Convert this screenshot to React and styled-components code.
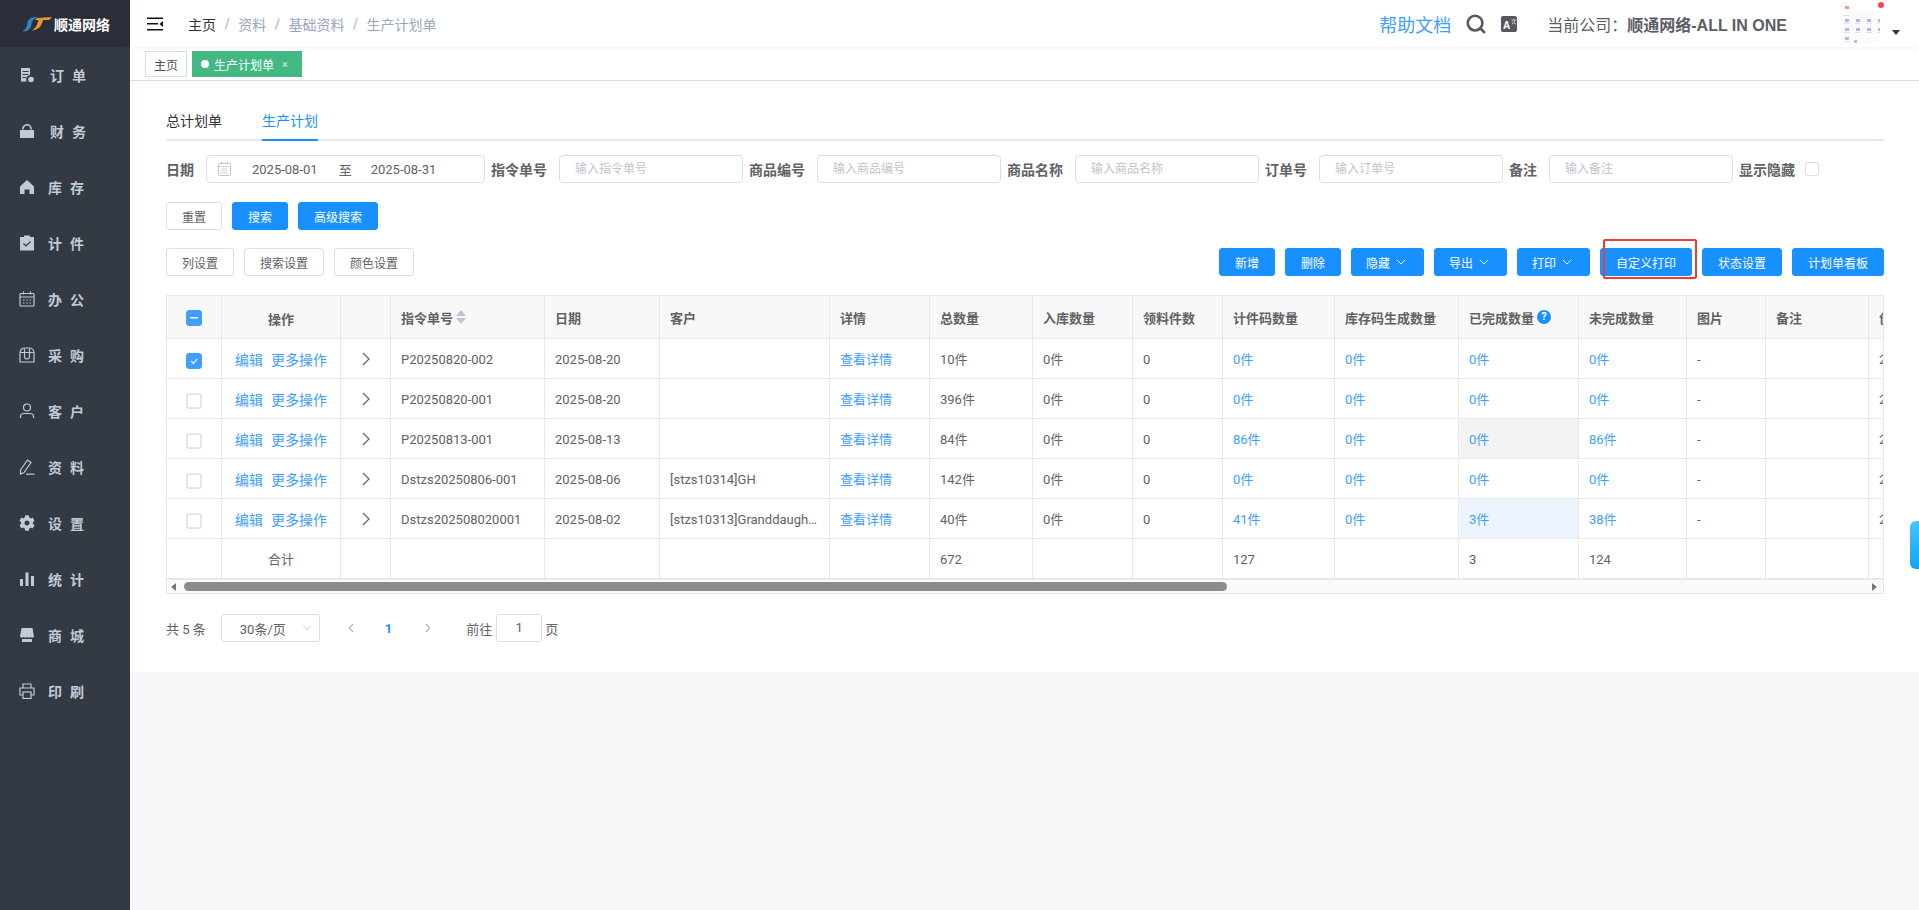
import React from 'react'
import styled, { createGlobalStyle } from 'styled-components'
import { ChevronDown, ChevronLeft, ChevronRight, Search } from 'lucide-react'
import { FaCog } from 'react-icons/fa'

const GlobalStyle = createGlobalStyle`
  html, body { margin: 0; padding: 0; height: 100%; background: #f7f8fa; overflow: hidden; }
  body { font-family: Roboto, "Noto Sans CJK SC", sans-serif; color: #606266; font-size: 13px; }
  * { box-sizing: border-box; }
`

const Shell = styled.div`
  display: flex;
  width: 100%;
  height: 100vh;
`

const Sidebar = styled.aside`
  width: 130px;
  flex: none;
  background: #343a43;
  display: flex;
  flex-direction: column;
`

const LogoBar = styled.div`
  height: 47px;
  background: #2b2f3a;
  display: flex;
  align-items: center;
  padding-left: 22px;
  gap: 1px;
`

const LogoText = styled.span`
  color: #fff;
  font-size: 14px;
  font-weight: 700;
`

const Nav = styled.nav`
  display: flex;
  flex-direction: column;
  padding-top: 0;
`

const NavItem = styled.div`
  height: 56px;
  display: flex;
  align-items: center;
  padding-left: 19px;
  color: #bfcbd9;
`

const NavLabel = styled.span`
  font-size: 14px;
  font-weight: 700;
  letter-spacing: 8px;
  margin-left: ${p => (p.$wide ? 15 : 13)}px;
`

const Main = styled.div`
  flex: 1;
  min-width: 0;
  display: flex;
  flex-direction: column;
`

const Header = styled.header`
  height: 47px;
  background: #fff;
  display: flex;
  align-items: center;
  padding: 0 19px 0 17px;
  box-shadow: 0 1px 4px rgba(0, 21, 41, 0.06);
  position: relative;
`

const Breadcrumb = styled.div`
  display: flex;
  align-items: center;
  margin-left: 25px;
  font-size: 14px;
  color: #97a8be;
`

const Crumb = styled.span`
  color: ${p => (p.$current ? '#303133' : '#97a8be')};
`

const CrumbSep = styled.span`
  color: #c0c4cc;
  font-weight: 700;
  margin: 0 8.5px;
`

const HeaderRight = styled.div`
  margin-left: auto;
  display: flex;
  align-items: center;
  color: #5a5e66;
`

const HelpLink = styled.a`
  color: #409eff;
  font-size: 18px;
  margin-right: 14px;
`

const SearchIcon = styled(Search)`
  margin-right: 14px;
`

const Company = styled.div`
  font-size: 16px;
  margin: 0 55px 0 30px;
  color: #5a5e66;
  b { font-weight: 700; font-family: "Liberation Sans", "Noto Sans CJK SC", sans-serif; }
`

const AvatarBox = styled.div`
  position: relative;
  width: 38px;
  height: 42px;
  margin-right: 12px;
`

const RedDot = styled.i`
  position: absolute;
  top: -1px;
  right: -4px;
  width: 6px;
  height: 6px;
  border-radius: 50%;
  background: #f44;
`

const Caret = styled.i`
  width: 0;
  height: 0;
  border-left: 4px solid transparent;
  border-right: 4px solid transparent;
  border-top: 5px solid #333;
  margin-top: 17px;
`

const TagBar = styled.div`
  height: 34px;
  background: #fff;
  border-bottom: 1px solid #d8dce5;
  display: flex;
  align-items: flex-start;
  gap: 5px;
  padding: 4px 0 0 15px;
`

const Tag = styled.div`
  height: 26px;
  display: flex;
  align-items: center;
  font-size: 12px;
  padding: ${p => (p.$active ? '0 13px 0 8px' : '0 8px')};
  background: ${p => (p.$active ? '#42b983' : '#fff')};
  color: ${p => (p.$active ? '#fff' : '#495060')};
  border: 1px solid ${p => (p.$active ? '#42b983' : '#d8dce5')};
`

const TagDot = styled.i`
  width: 8px;
  height: 8px;
  border-radius: 50%;
  background: #fff;
  margin-right: 5px;
`

const TagClose = styled.span`
  font-size: 11px;
  margin-left: 8px;
  color: #d5f0e3;
`

const Panel = styled.section`
  background: #fff;
  padding: 22px 35px 30px 36px;
  height: 591px;
`

const TabBar = styled.div`
  display: flex;
  gap: 40px;
  height: 38px;
  border-bottom: 2px solid #e4e7ed;
`

const TabItem = styled.div`
  height: 38px;
  line-height: 36px;
  font-size: 14px;
  color: ${p => (p.$active ? '#1890ff' : '#303133')};
  border-bottom: 2px solid ${p => (p.$active ? '#1890ff' : 'transparent')};
`

const FilterRow = styled.div`
  display: flex;
  align-items: center;
  gap: 6px;
  margin-top: 14px;
  height: 28px;
`

const Field = styled.div`
  display: flex;
  align-items: center;
  gap: 12px;
`

const FieldLabel = styled.label`
  font-size: 14px;
  font-weight: 700;
  color: #606266;
`

const TextInput = styled.div`
  width: 184px;
  height: 28px;
  border: 1px solid #dcdfe6;
  border-radius: 4px;
  padding-left: 15px;
  font-size: 12px;
  line-height: 26px;
  color: #c0c4cc;
`

const DateRange = styled.div`
  width: 279px;
  height: 28px;
  border: 1px solid #dcdfe6;
  border-radius: 4px;
  display: flex;
  align-items: center;
  padding-left: 11px;
  font-size: 13px;
  color: #606266;
`

const DateValue = styled.span`
  margin-left: ${p => p.$gap}px;
`

const HideCheck = styled.i`
  width: 14px;
  height: 14px;
  border: 1px solid #dcdfe6;
  border-radius: 2px;
  margin-left: 4px;
`

const ButtonRow = styled.div`
  display: flex;
  gap: 10px;
  margin-top: ${p => p.$top}px;
`

const Button = styled.button`
  position: relative;
  height: 28px;
  width: ${p => p.$w}px;
  padding: 0;
  display: flex;
  align-items: center;
  justify-content: center;
  gap: 3px;
  font-family: inherit;
  font-size: 12px;
  border-radius: 3px;
  color: ${p => (p.$primary ? '#fff' : '#606266')};
  background: ${p => (p.$primary ? '#1890ff' : '#fff')};
  border: 1px solid ${p => (p.$primary ? '#1890ff' : '#dcdfe6')};
`

const RedFrame = styled.i`
  position: absolute;
  top: -10px;
  bottom: -4px;
  left: 2px;
  right: -6px;
  border: 2px solid #f03a3a;
  border-radius: 2px;
`

const ActionBar = styled.div`
  display: flex;
  justify-content: space-between;
  margin-top: 18px;
`

const TableWrap = styled.div`
  margin-top: 19px;
  border: 1px solid #e8e8e8;
  overflow: hidden;
`

const Table = styled.table`
  table-layout: fixed;
  border-collapse: separate;
  border-spacing: 0;
  width: 1862px;
`

const Th = styled.th`
  height: 43px;
  background: #f8f8f9;
  font-size: 13px;
  font-weight: 700;
  color: #606266;
  text-align: ${p => (p.$center ? 'center' : 'left')};
  padding: ${p => (p.$center ? '2px 0 0' : '0 10px')};
  border-right: 1px solid #e8e8e8;
  border-bottom: 1px solid #e8e8e8;
  white-space: nowrap;
  overflow: hidden;
`

const Td = styled.td`
  height: 40px;
  font-size: 13px;
  color: ${p => (p.$link ? '#409eff' : '#606266')};
  background: ${p => p.$bg || '#fff'};
  text-align: ${p => (p.$center ? 'center' : 'left')};
  padding: ${p => (p.$center ? '0' : '0 10px')};
  padding-top: ${p => p.$drop || 0}px;
  border-right: 1px solid #e8e8e8;
  border-bottom: 1px solid #e8e8e8;
  white-space: nowrap;
  overflow: hidden;
  text-overflow: ellipsis;
`

const HeadInner = styled.span`
  display: inline-flex;
  align-items: center;
  gap: 3px;
`

const SortCaret = styled.span`
  display: inline-flex;
  flex-direction: column;
  gap: 2px;
  i { width: 0; height: 0; border-left: 5px solid transparent; border-right: 5px solid transparent; }
  i:first-child { border-bottom: 6px solid #c0c4cc; }
  i:last-child { border-top: 6px solid #c0c4cc; }
`

const HelpBadge = styled.span`
  width: 14px;
  height: 14px;
  border-radius: 50%;
  background: #1890ff;
  color: #fff;
  font-size: 11px;
  font-weight: 700;
  line-height: 14px;
  text-align: center;
`

const Check = styled.span`
  display: inline-flex;
  align-items: center;
  justify-content: center;
  vertical-align: middle;
  width: 16px;
  height: 16px;
  border-radius: 3px;
  border: ${p => (p.$on ? '1px solid #409eff' : '2px solid #e3e6ec')};
  background: ${p => (p.$on ? '#409eff' : '#fff')};
`

const CellLink = styled.a`
  color: #409eff;
  font-size: 14px;
  margin-left: ${p => p.$gap || 0}px;
`

const ScrollTrack = styled.div`
  height: 14px;
  background: #fafafa;
  border-top: 1px solid #e8e8e8;
  display: flex;
  align-items: center;
  padding: 0 6px 0 4px;
`

const ArrowTip = styled.i`
  width: 0;
  height: 0;
  border-top: 4px solid transparent;
  border-bottom: 4px solid transparent;
  border-${p => (p.$left ? 'right' : 'left')}: 5px solid #777;
  margin-left: ${p => (p.$left ? 0 : 'auto')};
`

const ScrollThumb = styled.div`
  width: 1043px;
  height: 9px;
  border-radius: 5px;
  background: #8c8c8c;
  margin-left: 8px;
`

const Pager = styled.div`
  display: flex;
  align-items: center;
  height: 28px;
  margin-top: 20px;
  font-size: 13px;
  color: #606266;
`

const PageSelect = styled.div`
  width: 99px;
  height: 28px;
  margin: 0 24px 0 15px;
  border: 1px solid #dcdfe6;
  border-radius: 3px;
  display: flex;
  align-items: center;
  justify-content: space-between;
  padding: 0 5px 0 18px;
`

const PageNum = styled.span`
  color: #1890ff;
  font-weight: 700;
  margin: 0 29px 0 27px;
`

const JumpInput = styled.div`
  width: 46px;
  height: 28px;
  border: 1px solid #dcdfe6;
  border-radius: 3px;
  margin: 0 3px 0 4px;
  text-align: center;
  line-height: 26px;
`

const JumpLabel = styled.span`
  margin-left: ${p => p.$left || 0}px;
`

const SideHandle = styled.div`
  position: fixed;
  right: 0;
  top: 521px;
  width: 9px;
  height: 48px;
  border-radius: 6px 0 0 6px;
  background: linear-gradient(180deg, #4cc3ff, #0ea5ef);
`

const Logo = () => (
  <svg width="31" height="16" viewBox="0 0 31 16">
    <path d="M16 1C9 1 6 3 5.500 7 5 11 3.500 14 .5 15.500 6 15.500 8.500 13 9.500 8.500 10 5 11 3 16 1Z" fill="#2f86c9" />
    <path d="M15 2L30 1L27 4H21C20 9 17 14 10 14.500 14 12 15.500 8 16.500 4H13Z" fill="#e8962e" />
  </svg>
)

const Hamburger = () => (
  <svg width="16" height="14" viewBox="0 0 16 14">
    <path d="M0 0.500H16V2H0ZM0 6H11V7.500H0ZM0 12H16V13.500H0Z" fill="#111" />
    <path d="M16 4V10L12.500 7Z" fill="#111" />
  </svg>
)

const Glyph = ({ children, fill }) => (
  <svg
    width="16"
    height="16"
    viewBox="0 0 16 16"
    fill={fill ? 'currentColor' : 'none'}
    stroke={fill ? 'none' : 'currentColor'}
    strokeWidth="1.200"
  >
    {children}
  </svg>
)

const icons = {
  order: (
    <Glyph fill>
      <path d="M2 1H11V8A4.500 4.500 0 0 0 7.500 14.500H2ZM3.500 4V5H9.500V4ZM3.500 7V8H9.500V7ZM3.500 10V11H7V10Z" fillRule="evenodd" />
      <circle cx="12" cy="12.500" r="2.800" />
    </Glyph>
  ),
  money: (
    <Glyph fill>
      <path d="M1 7H15V14.500A.5 .5 0 0 1 14.500 15H1.500A.5 .5 0 0 1 1 14.500Z" />
      <path d="M3 6.500C3 3.500 5 1 8 1S13 3.500 13 6.500H11.500C11.500 4.500 10 2.500 8 2.500S4.500 4.500 4.500 6.500Z" />
    </Glyph>
  ),
  home: (
    <Glyph fill>
      <path d="M8 1L15 7.500V15H10.500V10.500H5.500V15H1V7.500Z" />
    </Glyph>
  ),
  clip: (
    <Glyph fill>
      <path d="M5 0.500H11V2H15V15.500H1V2H5Z" />
      <path d="M4.500 8.500L7 11L11.500 6.500" fill="none" stroke="#343a43" strokeWidth="1.200" />
    </Glyph>
  ),
  calendar: (
    <Glyph>
      <rect x="1" y="2.500" width="14" height="12.500" rx="1" />
      <path d="M1 6H15M4.500 0.500V3.500M11.500 0.500V3.500M4 9H5.500M7.250 9H8.750M10.500 9H12M4 12H5.500M7.250 12H8.750M10.500 12H12" />
    </Glyph>
  ),
  box: (
    <Glyph>
      <path d="M1 6C1 3 3 1 6 1H10C13 1 15 3 15 6V15H1Z" />
      <path d="M1 5.500H15M5.500 1.500V9.500A2.500 2.500 0 0 0 10.500 9.500V1.500" />
    </Glyph>
  ),
  user: (
    <Glyph>
      <circle cx="8" cy="4.500" r="3.500" />
      <path d="M1.500 15V13.500C1.500 11.500 3 10.500 5 10.500H11C13 10.500 14.500 11.500 14.500 13.500V15" />
    </Glyph>
  ),
  pen: (
    <Glyph>
      <path d="M1.500 11L8.500 1L12 3.500L5 13.500L1.500 15Z" />
      <path d="M7 15.200H15.500" />
    </Glyph>
  ),
  bars: (
    <Glyph fill>
      <path d="M1 8H4V15H1ZM6.500 1.500H9.500V15H6.500ZM12 5H15V15H12Z" />
    </Glyph>
  ),
  shop: (
    <Glyph fill>
      <path d="M2.500 1H13.500L15 9.500C14 11 12.500 11 11.500 10C10.500 11 9 11 8 10C7 11 5.500 11 4.500 10C3.500 11 2 11 1 9.500Z" />
      <path d="M3 12H13V15H3Z" />
    </Glyph>
  ),
  print: (
    <Glyph>
      <path d="M4 5V1H12V5M4 12H1V5H15V12H12" />
      <rect x="4" y="9" width="8" height="6.500" />
    </Glyph>
  ),
}

const navItems = [
  { icon: icons.order, label: '订单', wide: true },
  { icon: icons.money, label: '财务', wide: true },
  { icon: icons.home, label: '库存' },
  { icon: icons.clip, label: '计件' },
  { icon: icons.calendar, label: '办公' },
  { icon: icons.box, label: '采购' },
  { icon: icons.user, label: '客户' },
  { icon: icons.pen, label: '资料' },
  { icon: <FaCog size={16} />, label: '设置' },
  { icon: icons.bars, label: '统计' },
  { icon: icons.shop, label: '商城' },
  { icon: icons.print, label: '印刷' },
]

const colWidths = [55, 119, 50, 154, 115, 170, 100, 103, 100, 90, 112, 124, 120, 108, 79, 103, 160]

const rows = [
  { on: true, no: 'P20250820-002', date: '2025-08-20', customer: '', total: '10件', code: '0件', stock: '0件', done: '0件', todo: '0件' },
  { no: 'P20250820-001', date: '2025-08-20', customer: '', total: '396件', code: '0件', stock: '0件', done: '0件', todo: '0件' },
  { no: 'P20250813-001', date: '2025-08-13', customer: '', total: '84件', code: '86件', stock: '0件', done: '0件', todo: '86件', doneBg: '#f3f3f3' },
  { no: 'Dstzs20250806-001', date: '2025-08-06', customer: '[stzs10314]GH', total: '142件', code: '0件', stock: '0件', done: '0件', todo: '0件' },
  { no: 'Dstzs202508020001', date: '2025-08-02', customer: '[stzs10313]Granddaughter', total: '40件', code: '41件', stock: '0件', done: '3件', todo: '38件', doneBg: '#ecf5ff' },
]

const leftButtons = [
  { text: '列设置', w: 68 },
  { text: '搜索设置', w: 80 },
  { text: '颜色设置', w: 80 },
]

const rightButtons = [
  { text: '新增', w: 56 },
  { text: '删除', w: 56 },
  { text: '隐藏', w: 73, menu: true },
  { text: '导出', w: 73, menu: true },
  { text: '打印', w: 73, menu: true },
  { text: '自定义打印', w: 92, marked: true },
  { text: '状态设置', w: 80 },
  { text: '计划单看板', w: 92 },
]

const filters = [
  { label: '指令单号', hint: '输入指令单号' },
  { label: '商品编号', hint: '输入商品编号' },
  { label: '商品名称', hint: '输入商品名称' },
  { label: '订单号', hint: '输入订单号' },
  { label: '备注', hint: '输入备注' },
]

const Thumbnail = () => (
  <svg width="38" height="42" viewBox="0 0 38 42">
    <rect x="1" y="8" width="36" height="32" rx="5" fill="#fbfbfd" />
    <rect x="3" y="3" width="4" height="3" fill="#e9a27e" />
    <rect x="1" y="12" width="6" height="1" fill="#ddd" />
    {[0, 1, 2].map(r =>
      [0, 1, 2, 3].map(c =>
        r < 2 || c === 0 ? (
          <g key={`${r}-${c}`}>
            <rect x={3 + c * 11} y={16 + r * 9} width="4" height="3" fill="#b4b6ea" />
            <rect x={2 + c * 11} y={20 + r * 9} width="6" height="1" fill="#e2e2e2" />
          </g>
        ) : null,
      ),
    )}
    <rect x="12" y="37" width="3" height="3" fill="#9ec4f0" />
  </svg>
)

const TranslateIcon = () => (
  <svg width="16" height="16" viewBox="0 0 16 16">
    <rect width="16" height="16" rx="2" fill="#55585f" />
    <text x="2" y="13" fontSize="10" fontWeight="700" fill="#fff" fontFamily="Liberation Sans">A</text>
    <path d="M10.500 4H15M12.700 3V4M11 8C13 7 14 5.500 14 4M11.500 5.500C12.500 7 13.500 7.500 15 8" stroke="#ddd" strokeWidth=".8" fill="none" />
  </svg>
)

const CalendarIcon = () => (
  <svg width="13" height="14" viewBox="0 0 13 14" fill="none" stroke="#c0c4cc">
    <rect x="0.500" y="1.500" width="12" height="12" rx="1" />
    <path d="M0.500 4.500H12.500M3.500 0V2M9.500 0V2M3 7H10M3 9H10M3 11H10" strokeDasharray="1.500 .8" />
  </svg>
)

const TickIcon = () => (
  <svg width="10" height="10" viewBox="0 0 10 10" fill="none" stroke="#fff" strokeWidth="1.200">
    <path d="M2 5L4.300 7.300L8.200 2.800" />
  </svg>
)

const RowChevron = () => (
  <svg width="8" height="14" viewBox="0 0 8 14" fill="none" stroke="#606266" strokeWidth="1.200">
    <path d="M1 1L7 7L1 13" />
  </svg>
)

export default function App() {
  return (
    <Shell>
      <GlobalStyle />
      <Sidebar>
        <LogoBar>
          <Logo />
          <LogoText>顺通网络</LogoText>
        </LogoBar>
        <Nav>
          {navItems.map(item => (
            <NavItem key={item.label}>
              {item.icon}
              <NavLabel $wide={item.wide}>{item.label}</NavLabel>
            </NavItem>
          ))}
        </Nav>
      </Sidebar>

      <Main>
        <Header>
          <Hamburger />
          <Breadcrumb>
            <Crumb $current>主页</Crumb>
            <CrumbSep>/</CrumbSep>
            <Crumb>资料</Crumb>
            <CrumbSep>/</CrumbSep>
            <Crumb>基础资料</Crumb>
            <CrumbSep>/</CrumbSep>
            <Crumb>生产计划单</Crumb>
          </Breadcrumb>
          <HeaderRight>
            <HelpLink>帮助文档</HelpLink>
            <SearchIcon size={22} strokeWidth={2.800} color="#55585f" />
            <TranslateIcon />
            <Company>
              当前公司：<b>顺通网络-ALL IN ONE</b>
            </Company>
            <AvatarBox>
              <Thumbnail />
              <RedDot />
            </AvatarBox>
            <Caret />
          </HeaderRight>
        </Header>

        <TagBar>
          <Tag>主页</Tag>
          <Tag $active>
            <TagDot />
            生产计划单
            <TagClose>×</TagClose>
          </Tag>
        </TagBar>

        <Panel>
          <TabBar>
            <TabItem>总计划单</TabItem>
            <TabItem $active>生产计划</TabItem>
          </TabBar>

          <FilterRow>
            <Field>
              <FieldLabel>日期</FieldLabel>
              <DateRange>
                <CalendarIcon />
                <DateValue $gap={21}>2025-08-01</DateValue>
                <DateValue $gap={21}>至</DateValue>
                <DateValue $gap={19}>2025-08-31</DateValue>
              </DateRange>
            </Field>
            {filters.map(f => (
              <Field key={f.label}>
                <FieldLabel>{f.label}</FieldLabel>
                <TextInput>{f.hint}</TextInput>
              </Field>
            ))}
            <FieldLabel>显示隐藏</FieldLabel>
            <HideCheck />
          </FilterRow>

          <ButtonRow $top={19}>
            <Button $w={56}>重置</Button>
            <Button $w={56} $primary>搜索</Button>
            <Button $w={80} $primary>高级搜索</Button>
          </ButtonRow>

          <ActionBar>
            <ButtonRow $top={0}>
              {leftButtons.map(b => (
                <Button key={b.text} $w={b.w}>{b.text}</Button>
              ))}
            </ButtonRow>
            <ButtonRow $top={0}>
              {rightButtons.map(b => (
                <Button key={b.text} $w={b.w} $primary>
                  {b.text}
                  {b.menu && <ChevronDown size={16} strokeWidth={1.300} />}
                  {b.marked && <RedFrame />}
                </Button>
              ))}
            </ButtonRow>
          </ActionBar>

          <TableWrap>
            <Table>
              <colgroup>
                {colWidths.map((w, i) => (
                  <col key={i} width={w} />
                ))}
              </colgroup>
              <thead>
                <tr>
                  <Th $center>
                    <Check $on>
                      <svg width="8" height="2" viewBox="0 0 8 2"><rect width="8" height="1.500" fill="#fff" /></svg>
                    </Check>
                  </Th>
                  <Th $center>操作</Th>
                  <Th />
                  <Th>
                    <HeadInner>
                      指令单号
                      <SortCaret><i /><i /></SortCaret>
                    </HeadInner>
                  </Th>
                  <Th>日期</Th>
                  <Th>客户</Th>
                  <Th>详情</Th>
                  <Th>总数量</Th>
                  <Th>入库数量</Th>
                  <Th>领料件数</Th>
                  <Th>计件码数量</Th>
                  <Th>库存码生成数量</Th>
                  <Th>
                    <HeadInner>
                      已完成数量
                      <HelpBadge>?</HelpBadge>
                    </HeadInner>
                  </Th>
                  <Th>未完成数量</Th>
                  <Th>图片</Th>
                  <Th>备注</Th>
                  <Th>创建时间</Th>
                </tr>
              </thead>
              <tbody>
                {rows.map(r => (
                  <tr key={r.no}>
                    <Td $center $drop={4}>
                      <Check $on={r.on}>{r.on && <TickIcon />}</Check>
                    </Td>
                    <Td $center>
                      <CellLink>编辑</CellLink>
                      <CellLink $gap={8}>更多操作</CellLink>
                    </Td>
                    <Td $center $drop={3}><RowChevron /></Td>
                    <Td $drop={2}>{r.no}</Td>
                    <Td $drop={2}>{r.date}</Td>
                    <Td $drop={2}>{r.customer}</Td>
                    <Td $link>查看详情</Td>
                    <Td>{r.total}</Td>
                    <Td>0件</Td>
                    <Td $drop={2}>0</Td>
                    <Td $link>{r.code}</Td>
                    <Td $link>{r.stock}</Td>
                    <Td $link $bg={r.doneBg}>{r.done}</Td>
                    <Td $link>{r.todo}</Td>
                    <Td $drop={2}>-</Td>
                    <Td />
                    <Td $drop={2}>{r.date}</Td>
                  </tr>
                ))}
                <tr>
                  <Td />
                  <Td $center>合计</Td>
                  <Td />
                  <Td />
                  <Td />
                  <Td />
                  <Td />
                  <Td $drop={2}>672</Td>
                  <Td />
                  <Td />
                  <Td $drop={2}>127</Td>
                  <Td />
                  <Td $drop={2}>3</Td>
                  <Td $drop={2}>124</Td>
                  <Td />
                  <Td />
                  <Td />
                </tr>
              </tbody>
            </Table>
            <ScrollTrack>
              <ArrowTip $left />
              <ScrollThumb />
              <ArrowTip />
            </ScrollTrack>
          </TableWrap>

          <Pager>
            <span>共 5 条</span>
            <PageSelect>
              30条/页
              <ChevronDown size={14} color="#c0c4cc" strokeWidth={1.500} />
            </PageSelect>
            <ChevronLeft size={14} color="#b0b4bb" />
            <PageNum>1</PageNum>
            <ChevronRight size={14} color="#b0b4bb" />
            <JumpLabel $left={31}>前往</JumpLabel>
            <JumpInput>1</JumpInput>
            <span>页</span>
          </Pager>
        </Panel>
      </Main>
      <SideHandle />
    </Shell>
  )
}
